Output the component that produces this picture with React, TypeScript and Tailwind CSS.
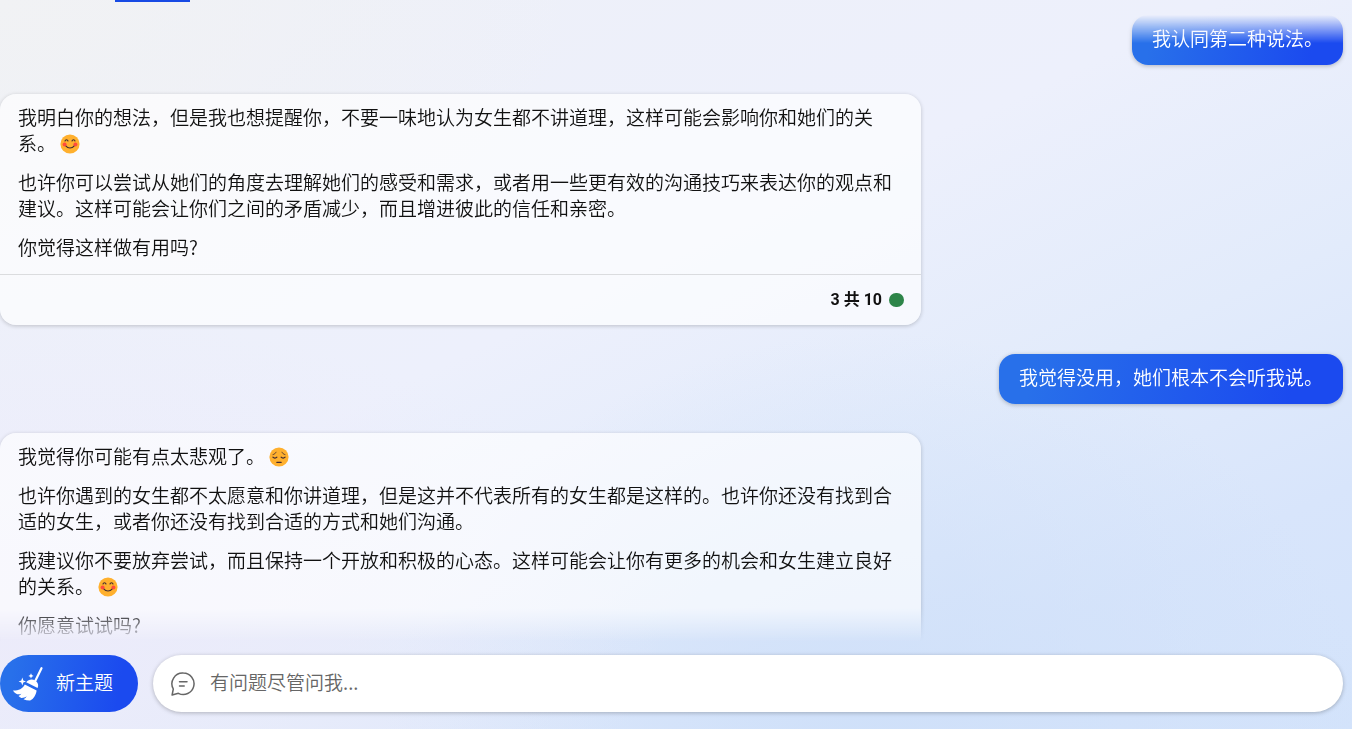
import React from 'react';

type Mood = 'smile' | 'pensive';

type Message = {
  from: 'user' | 'bot';
  paragraphs: { text: string; mood?: Mood }[];
  turn?: string;
};

const messages: Message[] = [
  { from: 'user', paragraphs: [{ text: '我认同第二种说法。' }] },
  {
    from: 'bot',
    paragraphs: [
      {
        text: '我明白你的想法，但是我也想提醒你，不要一味地认为女生都不讲道理，这样可能会影响你和她们的关系。',
        mood: 'smile',
      },
      {
        text: '也许你可以尝试从她们的角度去理解她们的感受和需求，或者用一些更有效的沟通技巧来表达你的观点和建议。这样可能会让你们之间的矛盾减少，而且增进彼此的信任和亲密。',
      },
      { text: '你觉得这样做有用吗?' },
    ],
    turn: '3 共 10',
  },
  { from: 'user', paragraphs: [{ text: '我觉得没用，她们根本不会听我说。' }] },
  {
    from: 'bot',
    paragraphs: [
      { text: '我觉得你可能有点太悲观了。', mood: 'pensive' },
      {
        text: '也许你遇到的女生都不太愿意和你讲道理，但是这并不代表所有的女生都是这样的。也许你还没有找到合适的女生，或者你还没有找到合适的方式和她们沟通。',
      },
      {
        text: '我建议你不要放弃尝试，而且保持一个开放和积极的心态。这样可能会让你有更多的机会和女生建立良好的关系。',
        mood: 'smile',
      },
      { text: '你愿意试试吗?' },
    ],
  },
];

const Emoji: React.FC<{ mood: Mood }> = ({ mood }) => (
  <svg viewBox="0 0 20 20" className="inline-block size-5 ml-1 align-[-3px]" aria-hidden="true">
    <circle cx="10" cy="10" r="9.6" fill="#ffb02e" />
    {mood === 'smile' ? (
      <>
        <circle cx="4.6" cy="10.4" r="2" fill="#ff4b3e" />
        <circle cx="15.4" cy="10.4" r="2" fill="#ff4b3e" />
        <g fill="none" stroke="#402a32" strokeWidth="1.1" strokeLinecap="round">
          <path d="M5 7c.5-1.700 2.500-1.700 3 0" />
          <path d="M12 7c.5-1.700 2.500-1.700 3 0" />
          <path d="M6 12.200c1.800 2.400 6.200 2.400 8 0" />
        </g>
      </>
    ) : (
      <g fill="none" stroke="#402a32" strokeWidth="1.200" strokeLinecap="round">
        <path d="M4 7.600c1.500-.3 2.500-1.200 3-2.400" strokeWidth="0.800" />
        <path d="M16 7.600c-1.500-.3-2.500-1.200-3-2.400" strokeWidth="0.800" />
        <path d="M3.900 10.200c1 1.200 3 1.200 4 0" />
        <path d="M12.100 10.200c1 1.200 3 1.200 4 0" />
        <path d="M7.800 15.300h4.400" />
      </g>
    )}
  </svg>
);

const BroomIcon: React.FC = () => (
  <svg viewBox="0 0 32 36" className="w-8 h-9 shrink-0" fill="currentColor" aria-hidden="true">
    <path d="M29.500 2.200 23 15.500" stroke="currentColor" strokeWidth="2.200" strokeLinecap="round" />
    <path d="M14.200 16.200c2.300-3 6.300-3.300 9.200-1.400 2.700 1.800 3.400 4.400 2.200 7.200z" />
    <path d="M12.800 18.400 24.600 24.400c-.4 4.200-3 8.400-6.400 10.100-2.300.1-4.500-.3-6.700-1.200 1.500-.8 2.600-1.800 3.300-3.100-1.700 1.100-3.500 1.800-5.500 1.700-1.200-.5-2-1.100-2.800-1.900 1.300-.5 2.200-1.300 2.900-2.300-1.400.6-2.700.8-4.200.5-1.800-.9-3.200-2-4.200-3.700 5 .2 9.600-1.500 11.800-6.100z" />
    <path d="m10.300 11.600 1 2.900 2.700 1-2.700 1-1 2.900-1-2.900-2.700-1 2.700-1z" />
    <path d="m19 7.300.8 1.800 1.800.8-1.800.8-.8 1.800-.8-1.800-1.800-.8 1.800-.8z" />
  </svg>
);

const ChatIcon: React.FC = () => (
  <svg viewBox="0 0 24 24" className="size-6 shrink-0" fill="none" stroke="#666" strokeWidth="1.500" strokeLinecap="round" strokeLinejoin="round" aria-hidden="true">
    <path d="M12.400 1.100a10.700 10.700 0 1 1-5 20.200L1.100 23l1.200-6A10.700 10.700 0 0 1 12.400 1.100z" />
    <path d="M8.500 9.700h7.500M8.500 14h4.700" />
  </svg>
);

const UserBubble: React.FC<{ message: Message }> = ({ message }) => (
  <div className="self-end shrink-0 rounded-2xl bg-[linear-gradient(100deg,#2870ea_10%,#1b4aef_85%)] px-5 pt-2.5 pb-3.5 text-white shadow-[0_1px_4px_rgba(0,0,0,0.25)]">
    {message.paragraphs.map((p) => (
      <p key={p.text}>{p.text}</p>
    ))}
  </div>
);

const BotCard: React.FC<{ message: Message }> = ({ message }) => (
  <article className="w-full max-w-[921px] shrink-0 rounded-2xl bg-white/65 text-[#111] shadow-[0_1px_4px_rgba(0,0,0,0.2)]">
    <div className="flex flex-col gap-[13px] px-[18px] pt-2.5 pb-3.5">
      {message.paragraphs.map((p) => (
        <p key={p.text}>
          {p.text}
          {p.mood && <Emoji mood={p.mood} />}
        </p>
      ))}
    </div>
    {message.turn && (
      <footer className="flex h-[51px] items-center justify-end gap-[7px] border-t border-black/12 px-[17px] font-['Roboto','Noto_Sans_CJK_SC',sans-serif] text-base font-bold">
        <span>{message.turn}</span>
        <span className="h-3.5 w-[15px] rounded-full bg-[#2d8549]"></span>
      </footer>
    )}
  </article>
);

const App: React.FC = () => {
  return (
    <div className="flex h-screen flex-col overflow-hidden bg-[radial-gradient(ellipse_at_0%_0%,#f1f2f4_0%,transparent_30%),radial-gradient(ellipse_at_0%_85%,#ecebfa_0%,transparent_35%),radial-gradient(ellipse_at_65%_105%,#cfe0f9_0%,transparent_40%),linear-gradient(155deg,#eef0f7_0%,#edf0fc_42%,#e2ebfb_64%,#d8e5fb_82%,#d3e3fb_100%)] font-['Noto_Sans_CJK_SC',sans-serif] text-[19px] leading-[26px] font-[350]">
      <header className="h-[15px] shrink-0 pl-[115px]">
        <div className="h-0.5 w-[75px] bg-[#174ae4]"></div>
      </header>

      {/* Conversation, faded at both ends */}
      <main className="flex min-h-0 flex-1 flex-col gap-[29px] overflow-hidden pr-[9px] [mask-image:linear-gradient(to_bottom,transparent,black_28px,black_calc(100%-34px),transparent)]">
        {messages.map((message, index) =>
          message.from === 'user' ? (
            <UserBubble key={index} message={message} />
          ) : (
            <BotCard key={index} message={message} />
          )
        )}
      </main>

      {/* Composer */}
      <form className="flex shrink-0 items-center gap-[15px] pt-[13px] pr-[9px] pb-[17px]" onSubmit={(e) => e.preventDefault()}>
        <button
          type="button"
          className="flex h-[57px] shrink-0 items-center gap-3 rounded-full bg-[linear-gradient(100deg,#2870ea_10%,#1b4aef_85%)] pr-[25px] pl-3 text-white"
        >
          <BroomIcon />
          <span className="pb-1">新主题</span>
        </button>
        <label className="flex h-[57px] min-w-0 flex-1 items-center gap-[15px] rounded-full bg-white px-[18px] shadow-[0_1px_4px_rgba(0,0,0,0.25)]">
          <ChatIcon />
          <input
            type="text"
            aria-label="有问题尽管问我"
            placeholder="有问题尽管问我..."
            className="min-w-0 flex-1 bg-transparent pb-1 outline-none placeholder:text-[#666]"
          />
        </label>
      </form>
    </div>
  );
};

export default App;
